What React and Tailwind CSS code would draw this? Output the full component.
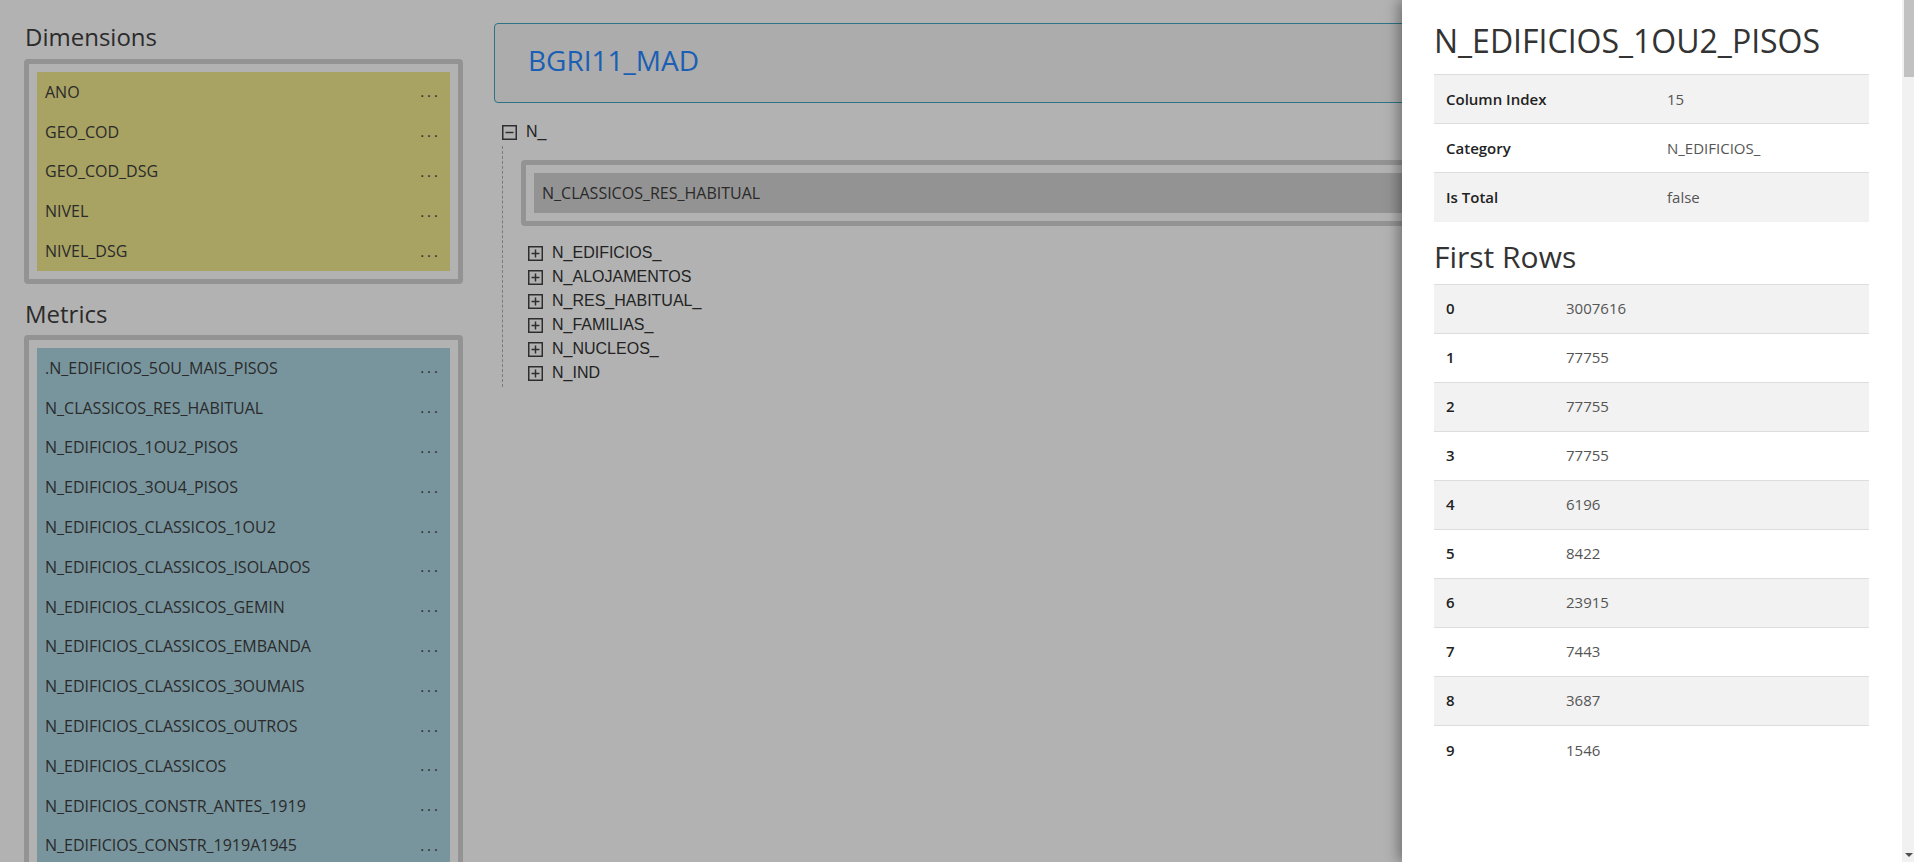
import React from "react";

const dimensions = ["ANO", "GEO_COD", "GEO_COD_DSG", "NIVEL", "NIVEL_DSG"];

const metrics = [
  ".N_EDIFICIOS_5OU_MAIS_PISOS",
  "N_CLASSICOS_RES_HABITUAL",
  "N_EDIFICIOS_1OU2_PISOS",
  "N_EDIFICIOS_3OU4_PISOS",
  "N_EDIFICIOS_CLASSICOS_1OU2",
  "N_EDIFICIOS_CLASSICOS_ISOLADOS",
  "N_EDIFICIOS_CLASSICOS_GEMIN",
  "N_EDIFICIOS_CLASSICOS_EMBANDA",
  "N_EDIFICIOS_CLASSICOS_3OUMAIS",
  "N_EDIFICIOS_CLASSICOS_OUTROS",
  "N_EDIFICIOS_CLASSICOS",
  "N_EDIFICIOS_CONSTR_ANTES_1919",
  "N_EDIFICIOS_CONSTR_1919A1945",
  "N_EDIFICIOS_CONSTR_1946A1960"
];

const categories = [
  "N_EDIFICIOS_",
  "N_ALOJAMENTOS",
  "N_RES_HABITUAL_",
  "N_FAMILIAS_",
  "N_NUCLEOS_",
  "N_IND"
];

const details = [
  ["Column Index", "15"],
  ["Category", "N_EDIFICIOS_"],
  ["Is Total", "false"]
];

const firstRows = [3007616, 77755, 77755, 77755, 6196, 8422, 23915, 7443, 3687, 1546];

const openSans = "font-['Open_Sans',sans-serif]";

const FieldItem = ({ name, color }) => (
  <div className={`flex h-[39.8px] items-center justify-between pl-[8px] pr-[9px] ${color}`}>
    <span className="text-[16px] text-[#2a2a2a]">{name}</span>
    <span className="text-[15px] leading-none tracking-[3px] text-[#2a2a2a]">...</span>
  </div>
);

const FieldBox = ({ items, color }) => (
  <div className="rounded-[4px] border-[5px] border-[#939393] p-[8px]">
    {items.map((name) => (
      <FieldItem key={name} name={name} color={color} />
    ))}
  </div>
);

const TreeToggle = ({ open }) => (
  <svg width="15" height="15" viewBox="0 0 15 15" className="shrink-0">
    <rect x="0.75" y="0.75" width="13.5" height="13.5" fill="none" stroke="#2e2e2e" strokeWidth="1.5" />
    <line x1="3.5" y1="7.5" x2="11.5" y2="7.5" stroke="#2e2e2e" strokeWidth="1.5" />
    {!open && <line x1="7.5" y1="3.5" x2="7.5" y2="11.5" stroke="#2e2e2e" strokeWidth="1.5" />}
  </svg>
);

const InfoTable = ({ rows, firstCol }) => (
  <table className="w-full border-collapse text-[15px]">
    <tbody>
      {rows.map(([label, value], i) => (
        <tr
          key={label}
          className={`h-[49px] border-t border-[#dddddd] ${i % 2 === 0 ? "bg-[#f2f2f2]" : "bg-white"}`}
        >
          <td className={`${firstCol} px-[12px] font-semibold text-[#222]`}>{label}</td>
          <td className="px-[12px] text-[#555]">{value}</td>
        </tr>
      ))}
    </tbody>
  </table>
);

export default function App() {
  return (
    <div className={`relative h-[862px] w-full overflow-hidden bg-[#b2b2b2] ${openSans}`}>
      <div className="flex gap-[31px] pl-[24px] pr-[24px]">
        {/* field lists */}
        <div className="w-[439px] shrink-0 pt-[24px]">
          <h2 className="mb-[9px] pl-[1px] text-[24px] leading-[26px] text-[#2b2b2b]">Dimensions</h2>
          <FieldBox items={dimensions} color="bg-[#a8a263]" />
          <h2 className="mb-[8px] mt-[17px] pl-[1px] text-[24px] leading-[26px] text-[#2b2b2b]">Metrics</h2>
          <FieldBox items={metrics} color="bg-[#78959e]" />
        </div>

        {/* cube / tree */}
        <div className="min-w-0 flex-1 pt-[23px]">
          <div className="flex h-[80px] items-center rounded-[4px] border border-[#2d7384] bg-[#acacac] pb-[6px] pl-[33px]">
            <span className="text-[28px] text-[#1a5fb4]">BGRI11_MAD</span>
          </div>

          <div className="mt-[17px] font-['Liberation_Sans',Arial,sans-serif] text-[16px] text-[#232323]">
            <div className="flex h-[24px] items-center gap-[9px] pl-[8px]">
              <TreeToggle open />
              <span>N_</span>
            </div>
            <div className="ml-[8px] mt-[2px] border-l border-dashed border-[#7a7a7a] pb-[2px] pt-[14px]">
              <div className="ml-[18px] rounded-[4px] border-[5px] border-[#939393] p-[8px]">
                <div className={`flex h-[40px] items-center bg-[#939393] pl-[8px] ${openSans} text-[16px] text-[#2a2a2a]`}>
                  N_CLASSICOS_RES_HABITUAL
                </div>
              </div>
              <div className="mt-[15px] pl-[25px]">
                {categories.map((c) => (
                  <div key={c} className="flex h-[24px] items-center gap-[9px]">
                    <TreeToggle />
                    <span>{c}</span>
                  </div>
                ))}
              </div>
            </div>
          </div>
        </div>
      </div>

      {/* details drawer */}
      <div className="absolute right-0 top-0 flex h-full w-[512px] bg-white shadow-[-4px_0_12px_rgba(0,0,0,0.35)]">
        <div className="min-w-0 flex-1 pl-[32px] pr-[33px] pt-[20px]">
          <h1 className="mb-[12px] text-[32px] leading-[42px] text-[#333]">N_EDIFICIOS_1OU2_PISOS</h1>
          <InfoTable rows={details} firstCol="w-[221px]" />
          <h2 className="mb-[9px] mt-[17px] text-[30px] leading-[36px] text-[#333]">First Rows</h2>
          <InfoTable rows={firstRows.map((v, i) => [String(i), String(v)])} firstCol="w-[120px]" />
        </div>
        <div className="relative w-[12px] shrink-0 bg-[#f1f1f1]">
          <div className="ml-[2px] h-[77px] bg-[#c1c1c1]" />
          <div className="absolute bottom-[5px] left-[3px] h-0 w-0 border-x-[4px] border-t-[4px] border-x-transparent border-t-[#505050]" />
        </div>
      </div>
    </div>
  );
}
